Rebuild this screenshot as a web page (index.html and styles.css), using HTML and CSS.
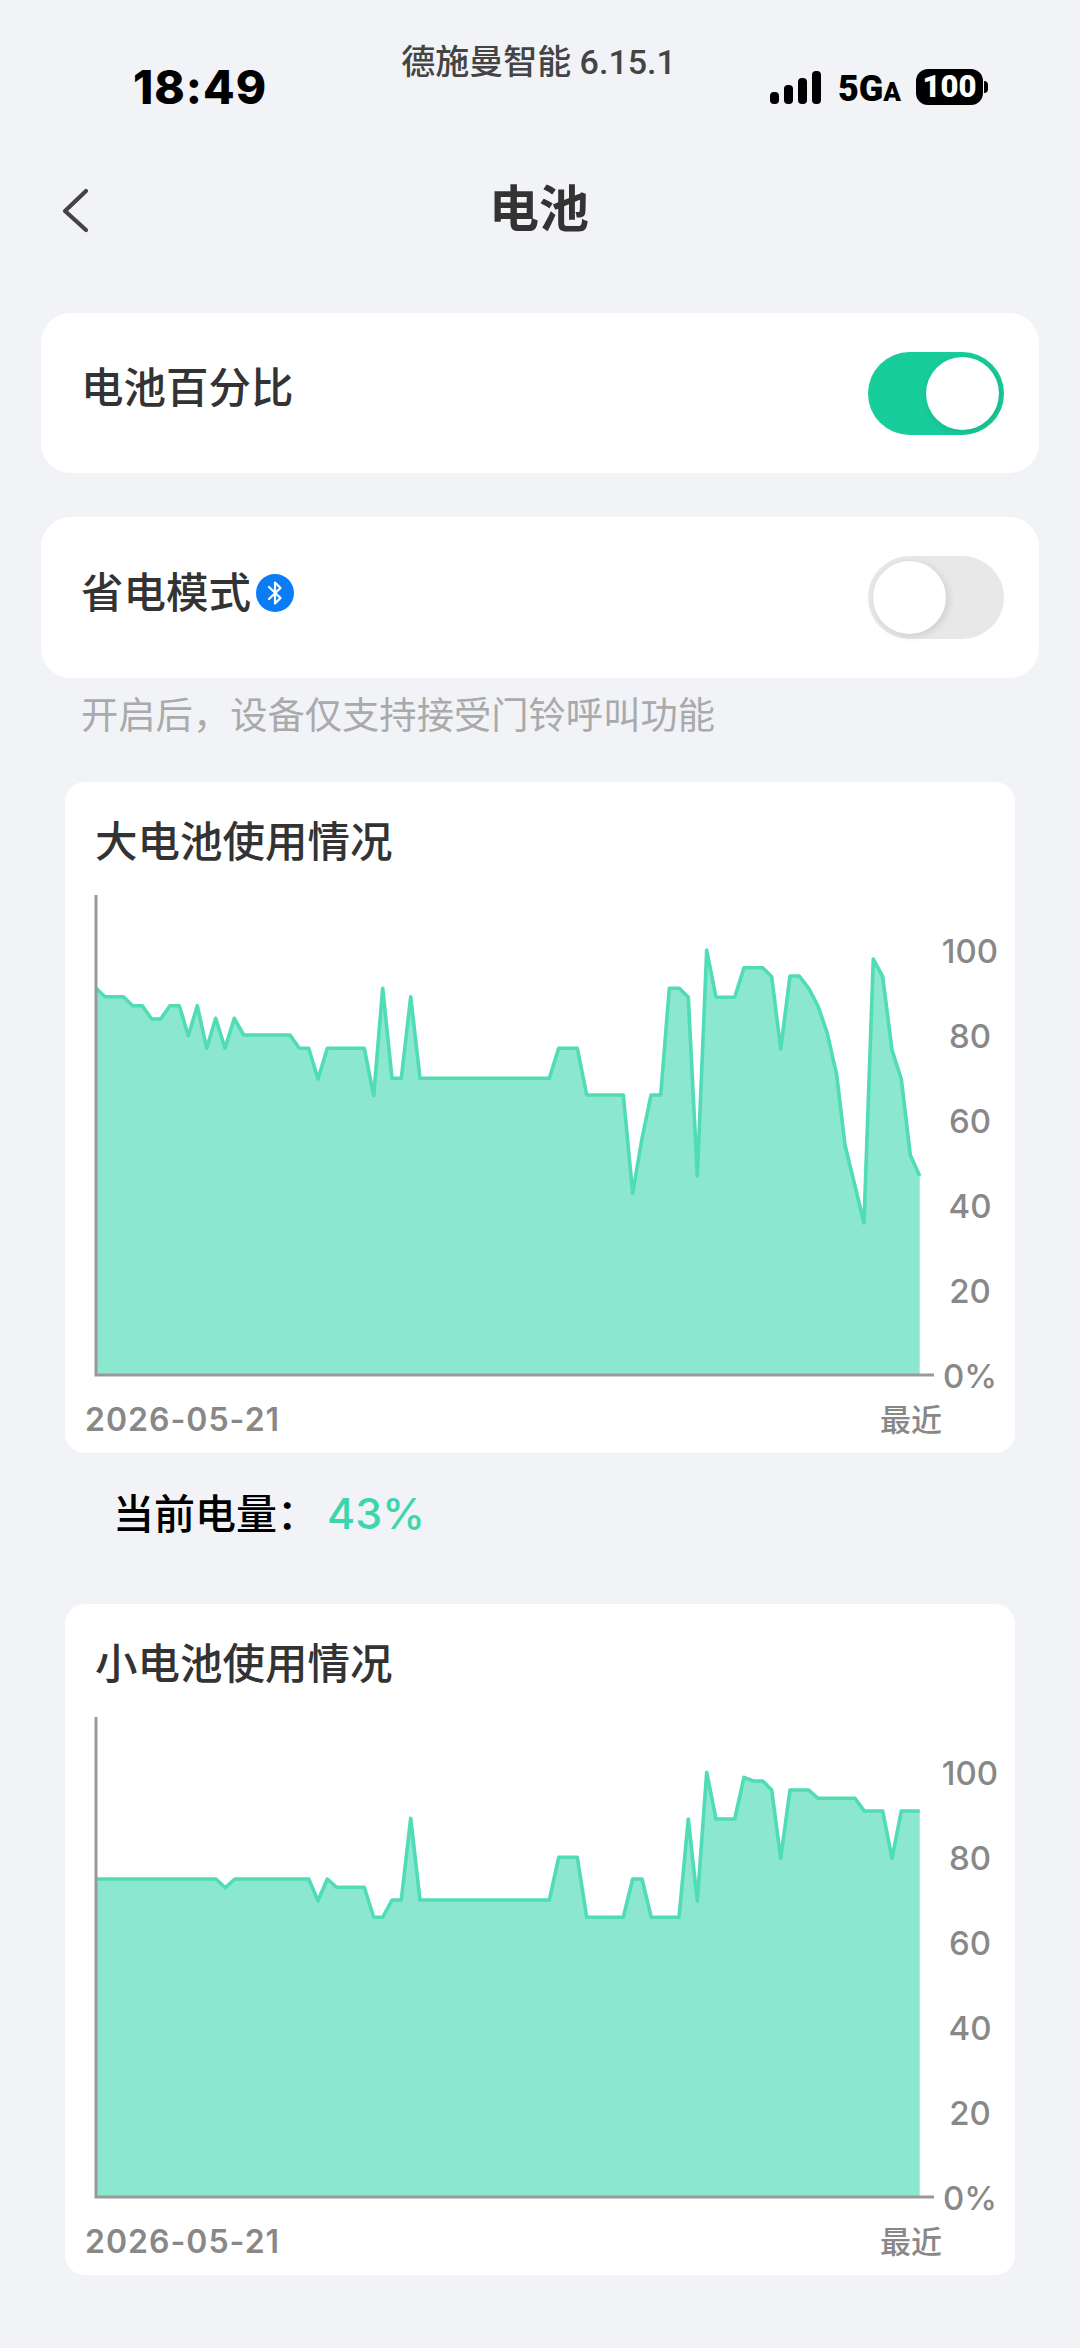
FILE: index.html
```html
<!DOCTYPE html>
<html lang="zh">
<head>
<meta charset="utf-8">
<title>电池</title>
<link rel="stylesheet" href="styles.css">
</head>
<body>
<div class="page">
  <header class="status">
    <div class="time">18:49</div>
    <div class="app-label">德施曼智能 6.15.1</div>
    <div class="status-right">
      <div class="signal"><i class="b1"></i><i class="b2"></i><i class="b3"></i><i class="b4"></i></div>
      <div class="network">5G<small>A</small></div>
      <div class="battery"><span class="battery-body">100</span><span class="battery-tip"></span></div>
    </div>
  </header>

  <nav class="nav">
    <svg class="back" width="30" height="46" viewBox="0 0 30 46"><polyline points="25,3 4,23 25,42" fill="none" stroke="#444" stroke-width="4.2" stroke-linecap="round" stroke-linejoin="round"/></svg>
    <h1 class="nav-title">电池</h1>
  </nav>

  <section class="setting first">
    <span class="setting-label">电池百分比</span>
    <span class="toggle on"><span class="knob"></span></span>
  </section>

  <section class="setting second">
    <span class="setting-label">省电模式<svg class="bt" width="38" height="38" viewBox="0 0 38 38"><circle cx="19" cy="19" r="19" fill="#0a7df6"/><polyline points="13,13 24.5,24 19,29.5 19,8.5 24.5,14 13,25" fill="none" stroke="#fff" stroke-width="2.2" stroke-linejoin="round" stroke-linecap="round"/></svg></span>
    <span class="toggle"><span class="knob"></span></span>
  </section>
  <p class="hint">开启后，设备仅支持接受门铃呼叫功能</p>

  <section class="chart-card">
    <h2 class="chart-title">大电池使用情况</h2>
    <svg class="chart" width="950" height="505" viewBox="65 890 950 505">
      <polygon class="area" points="96,1375 96,988.3 105,996.7 123.3,996.7 132.7,1005.7 142.3,1005.7 151.7,1019 160.7,1019 170,1005.7 179.3,1005.7 188.3,1035.7 197.3,1005.7 206.7,1048.3 215.7,1018.3 225,1048.3 234.3,1018.3 243.7,1035 290,1035 299.3,1048.3 308.7,1048.3 318,1079 327.3,1048.3 364.3,1048.3 373.7,1095.7 382.7,988.3 392,1078.3 401.3,1078.3 410.7,996.7 420,1078.3 549.3,1078.3 558.7,1048.3 577.3,1048.3 586.7,1095 623.3,1095 632.7,1193.3 641.7,1140 651,1095 660.7,1095 669.3,988.3 679.3,988.3 688.3,997.3 697.3,1176 706.7,950 716,997.3 734.7,997.3 744,967.7 762.7,967.7 771.7,976.7 780.7,1049 790,976 799.3,976 808.7,988.3 818,1006 827.3,1033.3 836.7,1075 845,1145 864,1223 873.3,959 882.7,976.7 892,1050 901.3,1079 910.3,1155 919.7,1176 919.7,1375"/>
      <polyline class="line" points="96,988.3 105,996.7 123.3,996.7 132.7,1005.7 142.3,1005.7 151.7,1019 160.7,1019 170,1005.7 179.3,1005.7 188.3,1035.7 197.3,1005.7 206.7,1048.3 215.7,1018.3 225,1048.3 234.3,1018.3 243.7,1035 290,1035 299.3,1048.3 308.7,1048.3 318,1079 327.3,1048.3 364.3,1048.3 373.7,1095.7 382.7,988.3 392,1078.3 401.3,1078.3 410.7,996.7 420,1078.3 549.3,1078.3 558.7,1048.3 577.3,1048.3 586.7,1095 623.3,1095 632.7,1193.3 641.7,1140 651,1095 660.7,1095 669.3,988.3 679.3,988.3 688.3,997.3 697.3,1176 706.7,950 716,997.3 734.7,997.3 744,967.7 762.7,967.7 771.7,976.7 780.7,1049 790,976 799.3,976 808.7,988.3 818,1006 827.3,1033.3 836.7,1075 845,1145 864,1223 873.3,959 882.7,976.7 892,1050 901.3,1079 910.3,1155 919.7,1176"/>
      <polyline class="axis" points="96,895 96,1375 934,1375"/>
      <text class="tick" x="970" y="963">100</text>
      <text class="tick" x="970" y="1048">80</text>
      <text class="tick" x="970" y="1133">60</text>
      <text class="tick" x="970" y="1218">40</text>
      <text class="tick" x="970" y="1303">20</text>
      <text class="tick" x="970" y="1388">0%</text>
    </svg>
    <div class="chart-foot"><span class="date">2026-05-21</span><span class="recent">最近</span></div>
  </section>

  <p class="current">当前电量：<span class="current-value">43%</span></p>

  <section class="chart-card">
    <h2 class="chart-title">小电池使用情况</h2>
    <svg class="chart" width="950" height="505" viewBox="65 1712 950 505">
      <polygon class="area" points="96,2197 96,1879 216,1879 225.3,1887.7 234.7,1879 308.7,1879 318,1900.7 327.3,1879 336.7,1887.3 364.3,1887.3 373.7,1917.3 382.7,1917.3 392,1900 401.3,1900 410.7,1818.3 420,1900 549.3,1900 558.7,1857.3 577.3,1857.3 586.7,1917.3 623.3,1917.3 632.7,1879 642,1879 651.3,1917.3 679,1917.3 688.3,1819 697.3,1901 706.7,1772.3 716,1819 734.7,1819 744,1777.3 753.3,1781 762.7,1781 771.7,1790 780.7,1858.3 790,1790 808.7,1790 818,1798.3 855,1798.3 864.3,1811 882.7,1811 892,1858.3 901.3,1811 919.7,1811 919.7,2197"/>
      <polyline class="line" points="96,1879 216,1879 225.3,1887.7 234.7,1879 308.7,1879 318,1900.7 327.3,1879 336.7,1887.3 364.3,1887.3 373.7,1917.3 382.7,1917.3 392,1900 401.3,1900 410.7,1818.3 420,1900 549.3,1900 558.7,1857.3 577.3,1857.3 586.7,1917.3 623.3,1917.3 632.7,1879 642,1879 651.3,1917.3 679,1917.3 688.3,1819 697.3,1901 706.7,1772.3 716,1819 734.7,1819 744,1777.3 753.3,1781 762.7,1781 771.7,1790 780.7,1858.3 790,1790 808.7,1790 818,1798.3 855,1798.3 864.3,1811 882.7,1811 892,1858.3 901.3,1811 919.7,1811"/>
      <polyline class="axis" points="96,1717 96,2197 934,2197"/>
      <text class="tick" x="970" y="1785">100</text>
      <text class="tick" x="970" y="1870">80</text>
      <text class="tick" x="970" y="1955">60</text>
      <text class="tick" x="970" y="2040">40</text>
      <text class="tick" x="970" y="2125">20</text>
      <text class="tick" x="970" y="2210">0%</text>
    </svg>
    <div class="chart-foot"><span class="date">2026-05-21</span><span class="recent">最近</span></div>
  </section>
</div>
</body>
</html>
```
FILE: styles.css
```css
* { box-sizing: border-box; }
html, body { margin: 0; padding: 0; }
body {
  background: #f1f3f7;
  font-family: "Inter", "Noto Sans CJK SC", sans-serif;
  color: #333;
}
.page { width: 1080px; height: 2348px; overflow: hidden; }

/* status bar */
.status {
  height: 150px;
  display: grid;
  grid-template-columns: 1fr auto 1fr;
  align-items: start;
  padding: 0 92px 0 133px;
}
.time {
  margin-top: 60px;
  font-size: 46px;
  line-height: 54px;
  font-weight: 800;
  color: #000;
  letter-spacing: 1px;
}
.app-label {
  margin: 41px 0 0 -44px;
  font-size: 34px;
  line-height: 42px;
  font-weight: 500;
  color: #444;
  font-family: "Roboto", "Noto Sans CJK SC", sans-serif;
  white-space: nowrap;
}
.status-right {
  display: flex;
  justify-content: flex-end;
  align-items: flex-start;
  margin-top: 69px;
}
.signal {
  display: flex;
  align-items: flex-end;
  gap: 5px;
  height: 35px;
  margin-right: 17px;
}
.signal i { display: block; width: 9px; border-radius: 4px; background: #000; }
.signal .b1 { height: 12px; }
.signal .b2 { height: 19px; }
.signal .b3 { height: 26px; }
.signal .b4 { height: 33px; }
.network {
  font-family: "Roboto", sans-serif;
  font-weight: 900;
  font-size: 36px;
  line-height: 36px;
  color: #000;
  margin: 2px 15px 0 0;
}
.network small { font-size: 26px; font-weight: 900; }
.battery { display: flex; align-items: center; height: 36px; }
.battery-body {
  width: 67px;
  height: 36px;
  border-radius: 12px;
  background: #000;
  color: #fff;
  font-family: "Roboto", sans-serif;
  font-size: 31px;
  font-weight: 900;
  line-height: 36px;
  text-align: center;
}
.battery-tip {
  width: 4px;
  height: 12px;
  margin-left: 1px;
  background: #000;
  border-radius: 0 6px 6px 0;
}

/* nav */
.nav {
  height: 118px;
  position: relative;
  display: flex;
  align-items: center;
  justify-content: center;
}
.back { position: absolute; left: 61px; top: 38px; }
.nav-title { margin: 0 0 0 -2px; font-size: 50px; line-height: 60px; font-weight: 700; color: #333; }

/* settings */
.setting {
  height: 160px;
  margin: 0 41px;
  padding: 0 35px 0 40px;
  background: #fff;
  border-radius: 30px;
  display: flex;
  align-items: center;
  justify-content: space-between;
}
.setting.first { margin-top: 45px; }
.setting.second { margin-top: 44px; height: 161px; }
.setting-label {
  display: flex;
  align-items: center;
  gap: 5px;
  padding-bottom: 10px;
  font-size: 42.5px;
  line-height: 50px;
  font-weight: 500;
  color: #333;
}
.toggle {
  width: 136px;
  height: 83px;
  border-radius: 42px;
  padding: 5px;
  background: #e8e8e8;
  display: flex;
  justify-content: flex-start;
}
.toggle.on { background: #17cd9b; justify-content: flex-end; }
.knob {
  width: 73px;
  height: 73px;
  border-radius: 50%;
  background: #fff;
  box-shadow: 2px 2px 8px rgba(0, 0, 0, 0.12);
}
.hint {
  margin: 16px 0 0 81px;
  font-size: 37.3px;
  line-height: 44px;
  color: #aaa;
}

/* charts */
.chart-card {
  width: 950px;
  height: 671px;
  margin: 44px 0 0 65px;
  background: #fff;
  border-radius: 20px;
}
.chart-title {
  margin: 0;
  padding: 35px 0 0 30px;
  height: 108px;
  font-size: 42.5px;
  line-height: 50px;
  font-weight: 500;
  color: #333;
}
.chart { display: block; }
.area { fill: #8ce7cf; stroke: none; }
.line { fill: none; stroke: #4fdcb6; stroke-width: 3.6; stroke-linejoin: round; }
.axis { fill: none; stroke: #999; stroke-width: 3; }
.tick {
  font-family: "Inter", sans-serif;
  font-size: 33px;
  font-weight: 500;
  fill: #888;
  text-anchor: middle;
}
.chart-foot {
  display: flex;
  justify-content: space-between;
  align-items: center;
  padding: 5px 73px 0 20px;
  color: #888;
}
.date { font-size: 32px; line-height: 40px; font-weight: 600; letter-spacing: 1px; }
.recent { font-size: 31px; line-height: 40px; font-weight: 500; }
.current {
  margin: 34px 0 0 113px;
  height: 52px;
  font-size: 41px;
  line-height: 52px;
  font-weight: 500;
  color: #000;
}
.current-value { margin-left: 9px; font-size: 43px; color: #3dd6ac; }
.current + .chart-card { margin-top: 65px; }
```
